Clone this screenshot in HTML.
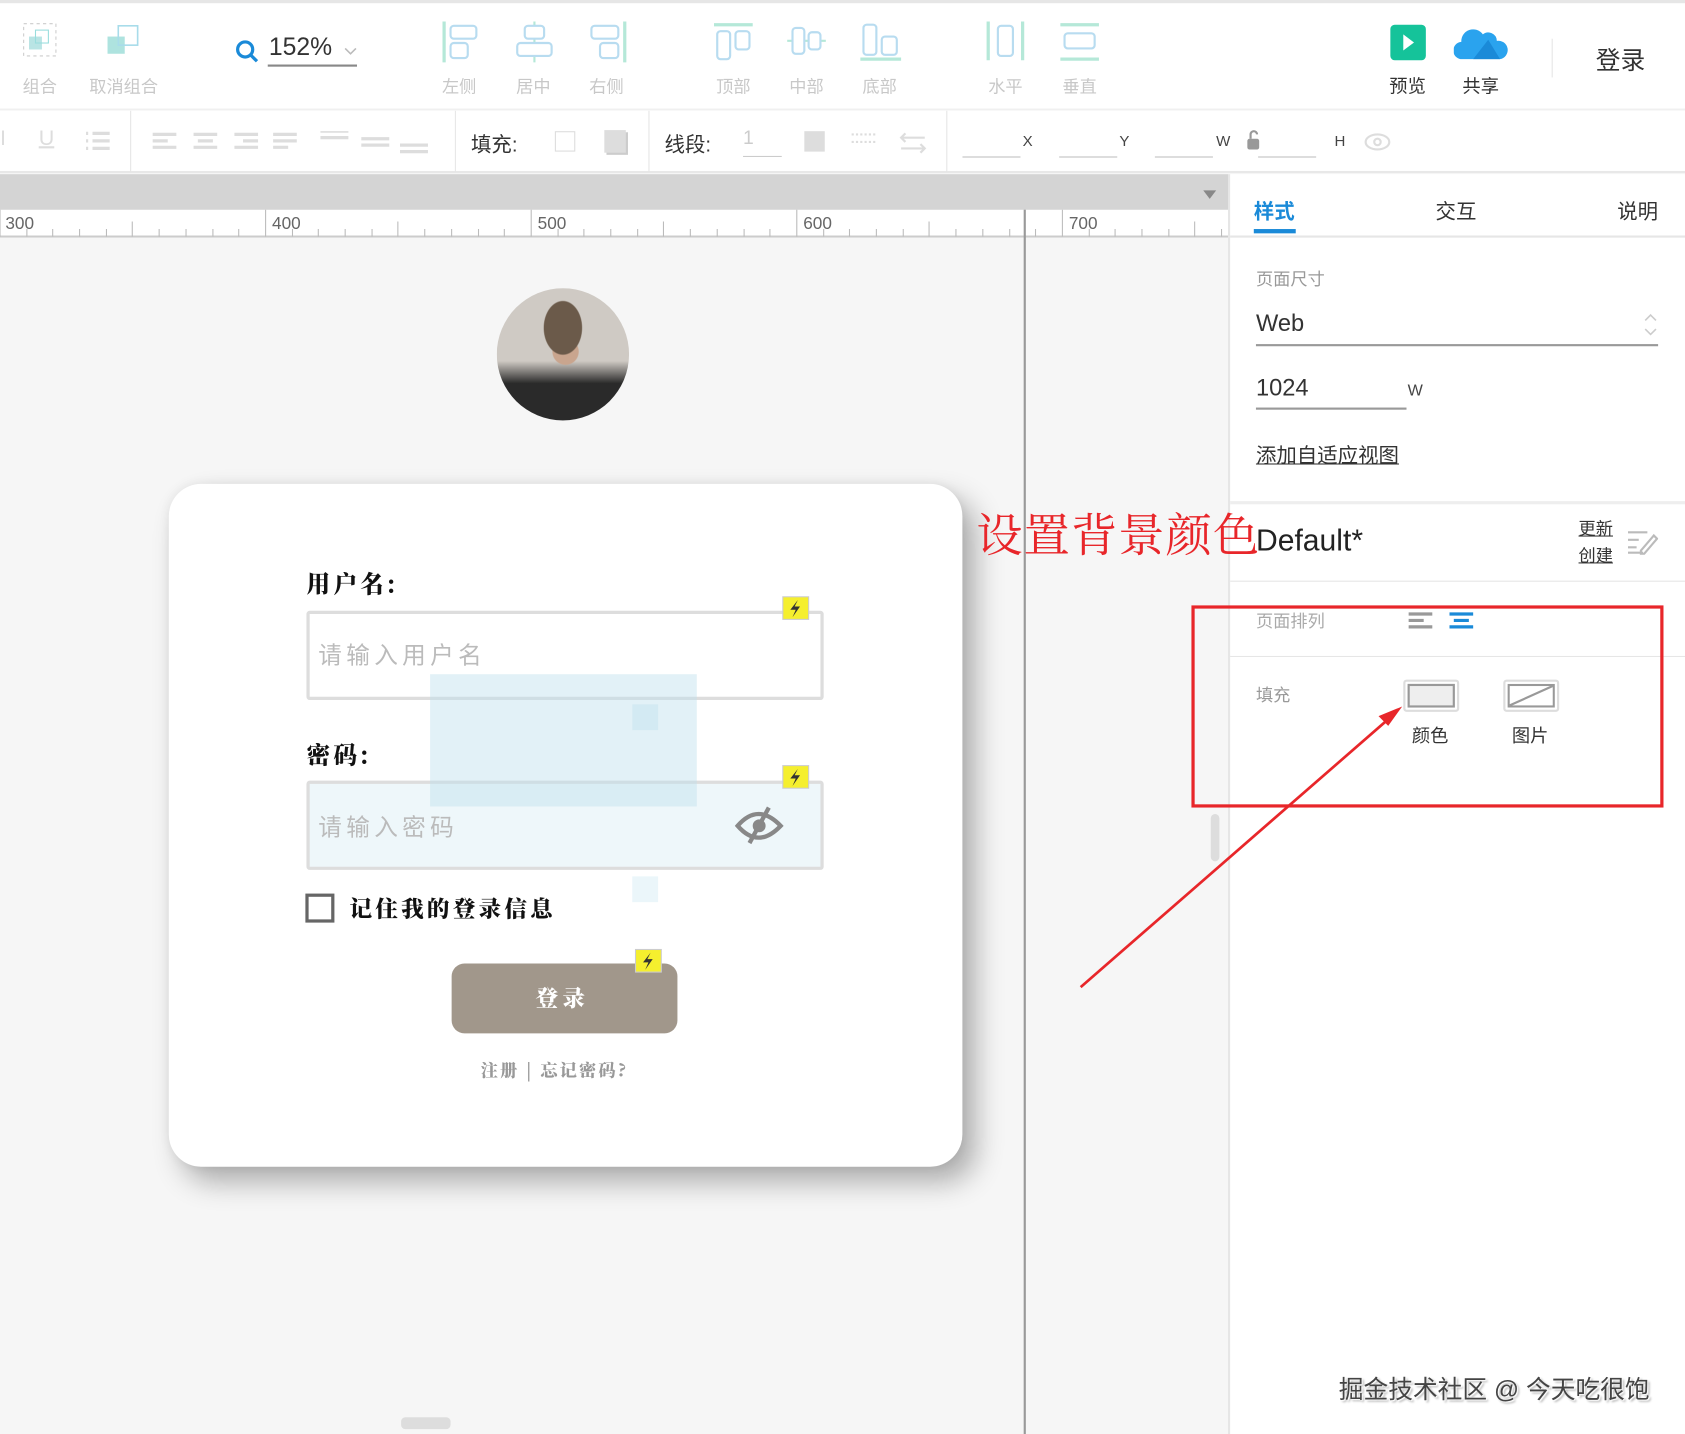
<!DOCTYPE html>
<html><head><meta charset="utf-8"><style>
*{margin:0;padding:0;box-sizing:border-box}
html,body{width:1685px;height:1434px;overflow:hidden;background:#fff}
body{font-family:"Liberation Sans","Noto Sans CJK SC",sans-serif}
#w{position:absolute;left:0;top:0;width:1567px;height:1334px;transform:scale(1.0753);transform-origin:0 0;background:#f6f6f6}
.a{position:absolute}
.lbl{position:absolute;font-size:16px;color:#c8c8c8;top:67px}
.ic{position:absolute;top:20px}
.ser{font-family:"Noto Serif CJK SC","WenQuanYi Zen Hei",serif;font-weight:900}
</style></head><body><div id="w">
<div class="a" style="left:0;top:0;width:1567px;height:102px;background:#fff;border-top:3px solid #e6e6e6;border-bottom:1px solid #ececec"></div>
<svg class="ic" style="left:20px" width="36" height="36"><rect x="2" y="2" width="30" height="30" fill="none" stroke="#ccc" stroke-dasharray="3 3"/><rect x="7" y="14" width="12" height="12" fill="#b9e4e4"/><rect x="13" y="8" width="12" height="12" fill="none" stroke="#9dd"/></svg>
<svg class="ic" style="left:96px" width="40" height="36"><rect x="4" y="14" width="16" height="16" fill="#aee3df"/><rect x="14" y="4" width="18" height="18" fill="none" stroke="#a8dcea" stroke-width="1.5"/></svg>
<div class="lbl" style="left:21px">组合</div><div class="lbl" style="left:83px">取消组合</div>
<svg class="a" style="left:218px;top:36px" width="24" height="24"><circle cx="10" cy="10" r="7" fill="none" stroke="#1a8ad8" stroke-width="3"/><path d="M15 15l6 6" stroke="#1a8ad8" stroke-width="3"/></svg>
<div class="a" style="left:250px;top:30px;font-size:23px;color:#333">152%</div>
<svg class="a" style="left:320px;top:44px" width="12" height="8"><path d="M1 1l5 5 5-5" fill="none" stroke="#bbb" stroke-width="1.5"/></svg>
<div class="a" style="left:249px;top:60px;width:83px;height:2px;background:#888"></div>
<svg class="ic" style="left:410px" width="40" height="40"><path d="M3 0v38" stroke="#b5e8d8" stroke-width="3"/><rect x="9" y="4" width="24" height="12" rx="3" fill="none" stroke="#b8dcf0" stroke-width="2"/><rect x="9" y="20" width="16" height="14" rx="3" fill="none" stroke="#b8dcf0" stroke-width="2"/></svg>
<svg class="ic" style="left:478px" width="40" height="40"><path d="M19 0v38" stroke="#b5e8d8" stroke-width="2"/><rect x="10" y="4" width="18" height="12" rx="3" fill="#fff" stroke="#b8dcf0" stroke-width="2"/><rect x="3" y="20" width="32" height="12" rx="3" fill="#fff" stroke="#b8dcf0" stroke-width="2"/></svg>
<svg class="ic" style="left:546px" width="40" height="40"><path d="M35 0v38" stroke="#b5e8d8" stroke-width="3"/><rect x="4" y="4" width="25" height="12" rx="3" fill="none" stroke="#b8dcf0" stroke-width="2"/><rect x="12" y="20" width="17" height="14" rx="3" fill="none" stroke="#b8dcf0" stroke-width="2"/></svg>
<div class="lbl" style="left:411px">左侧</div><div class="lbl" style="left:480px">居中</div><div class="lbl" style="left:548px">右侧</div>
<svg class="ic" style="left:664px" width="40" height="40"><path d="M0 3h36" stroke="#b5e8d8" stroke-width="3"/><rect x="3" y="9" width="12" height="26" rx="3" fill="none" stroke="#b8dcf0" stroke-width="2"/><rect x="20" y="9" width="13" height="17" rx="3" fill="none" stroke="#b8dcf0" stroke-width="2"/></svg>
<svg class="ic" style="left:732px" width="40" height="40"><path d="M0 18h36" stroke="#b5e8d8" stroke-width="2"/><rect x="5" y="6" width="11" height="24" rx="3" fill="#fff" stroke="#b8dcf0" stroke-width="2"/><rect x="20" y="10" width="11" height="16" rx="3" fill="#fff" stroke="#b8dcf0" stroke-width="2"/></svg>
<svg class="ic" style="left:800px" width="40" height="40"><path d="M0 35h38" stroke="#b5e8d8" stroke-width="3"/><rect x="3" y="3" width="12" height="28" rx="3" fill="none" stroke="#b8dcf0" stroke-width="2"/><rect x="20" y="14" width="14" height="17" rx="3" fill="none" stroke="#b8dcf0" stroke-width="2"/></svg>
<div class="lbl" style="left:666px">顶部</div><div class="lbl" style="left:734px">中部</div><div class="lbl" style="left:802px">底部</div>
<svg class="ic" style="left:916px" width="40" height="40"><path d="M3 0v36M35 0v36" stroke="#b5e8d8" stroke-width="3"/><rect x="12" y="4" width="14" height="28" rx="3" fill="none" stroke="#b8dcf0" stroke-width="2"/></svg>
<svg class="ic" style="left:986px" width="40" height="40"><path d="M0 3h36M0 35h36" stroke="#b5e8d8" stroke-width="3"/><rect x="4" y="11" width="28" height="14" rx="3" fill="none" stroke="#b8dcf0" stroke-width="2"/></svg>
<div class="lbl" style="left:919px">水平</div><div class="lbl" style="left:988px">垂直</div>
<svg class="a" style="left:1292px;top:22px" width="36" height="36"><rect x="1" y="1" width="33" height="33" rx="4" fill="#15c39a"/><path d="M13 10l10 7.5-10 7.5z" fill="#fff"/></svg>
<svg class="a" style="left:1352px;top:22px" width="52" height="36"><path d="M8 33a8 8 0 0 1-1-16 11 11 0 0 1 20-7 8 8 0 0 1 13 6 8 8 0 0 1 3 17z" fill="#2aa3ee"/><path d="M18 33l14-18 11 18z" fill="#1a8ad8"/></svg>
<div class="a" style="left:1292px;top:66px;font-size:17px;color:#333">预览</div>
<div class="a" style="left:1360px;top:66px;font-size:17px;color:#333">共享</div>
<div class="a" style="left:1443px;top:36px;width:1px;height:36px;background:#e6e6e6"></div>
<div class="a" style="left:1484px;top:37px;font-size:23px;color:#333">登录</div>
<div class="a" style="left:0;top:103px;width:1567px;height:58px;background:#fff;border-bottom:2px solid #e8e8e8"></div>
<div class="a" style="left:121px;top:103px;width:1px;height:57px;background:#e6e6e6"></div>
<div class="a" style="left:423px;top:103px;width:1px;height:57px;background:#e6e6e6"></div>
<div class="a" style="left:603px;top:103px;width:1px;height:57px;background:#e6e6e6"></div>
<div class="a" style="left:880px;top:103px;width:1px;height:57px;background:#e6e6e6"></div>
<div class="a" style="left:0;top:118px;font-size:20px;color:#ddd">I</div>
<div class="a" style="left:36px;top:118px;font-size:20px;color:#ddd;text-decoration:underline">U</div>
<svg class="a" style="left:78px;top:122px" width="28" height="20"><g stroke="#ddd" stroke-width="3"><path d="M2 2h2M8 2h16M2 9h2M8 9h16M2 16h2M8 16h16"/></g></svg>
<svg class="a" style="left:140px;top:122px" width="270" height="24" stroke="#ddd" stroke-width="3"><path d="M2 3h22M2 9h14M2 15h22M40 3h22M44 9h14M40 15h22M78 3h22M86 9h14M78 15h22M114 3h22M114 9h22M114 15h14M158 0h26M158 6h26M196 7h26M196 13h26M232 13h26M232 19h26"/></svg>
<div class="a" style="left:438px;top:120px;font-size:19px;color:#333">填充:</div>
<div class="a" style="left:516px;top:122px;width:19px;height:19px;border:1px solid #ddd"></div>
<div class="a" style="left:562px;top:121px;width:20px;height:21px;background:#ddd;box-shadow:2px 2px 0 #ccc"></div>
<div class="a" style="left:618px;top:120px;font-size:19px;color:#333">线段:</div>
<div class="a" style="left:691px;top:118px;font-size:18px;color:#ccc">1</div>
<div class="a" style="left:691px;top:145px;width:36px;height:1px;background:#ccc"></div>
<div class="a" style="left:748px;top:122px;width:19px;height:19px;background:#ddd"></div>
<svg class="a" style="left:790px;top:120px" width="80" height="26" fill="none" stroke="#ddd" stroke-width="2"><path d="M2 5h24M2 12h24" stroke-dasharray="2 2"/><path d="M48 8h22M52 4l-4 4 4 4M48 18h22M66 14l4 4-4 4"/></svg>
<svg class="a" style="left:895px;top:120px" width="410" height="30"><g stroke="#bbb"><path d="M0 26h54M90 26h54M179 26h54M275 26h54"/></g><g font-size="14" fill="#444" font-family="Liberation Sans"><text x="56" y="16">X</text><text x="146" y="16">Y</text><text x="236" y="16">W</text><text x="346" y="16">H</text></g><rect x="265" y="9" width="11" height="10" rx="2" fill="#999"/><path d="M268 9v-4a3 3 0 0 1 6 0" fill="none" stroke="#999" stroke-width="2"/><ellipse cx="386" cy="12" rx="11" ry="7" fill="none" stroke="#ddd" stroke-width="2"/><circle cx="386" cy="12" r="3" fill="none" stroke="#ddd" stroke-width="2"/></svg>
<div class="a" style="left:0;top:162px;width:1143px;height:34px;background:#d4d4d4"></div>
<div class="a" style="left:1119px;top:177px;border:6px solid transparent;border-top:8px solid #888"></div>
<svg class="a" style="left:0;top:195px" width="1143" height="26"><rect width="1143" height="26" fill="#fff"/><path d="M0 25h1143" stroke="#ccc" stroke-width="2"/>
<g stroke="#bbb"><path d="M0 0v25M247 0v25M494 0v25M741 0v25M988 0v25"/>
<path d="M25 18v7M49 18v7M74 18v7M99 18v7M123 11v14M148 18v7M173 18v7M198 18v7M222 18v7M272 18v7M296 18v7M321 18v7M346 18v7M370 11v14M395 18v7M420 18v7M445 18v7M469 18v7M519 18v7M543 18v7M568 18v7M593 18v7M617 11v14M642 18v7M667 18v7M692 18v7M716 18v7M766 18v7M790 18v7M815 18v7M840 18v7M864 11v14M889 18v7M914 18v7M939 18v7M963 18v7M1013 18v7M1037 18v7M1062 18v7M1087 18v7M1111 11v14M1136 18v7"/></g>
<g font-size="16" fill="#666" font-family="Liberation Sans"><text x="5" y="18">300</text><text x="253" y="18">400</text><text x="500" y="18">500</text><text x="747" y="18">600</text><text x="994" y="18">700</text></g></svg>
<div class="a" style="left:952px;top:195px;width:2px;height:1139px;background:#999"></div>
<div class="a" style="left:1126px;top:757px;width:8px;height:44px;border-radius:4px;background:#ddd"></div>
<div class="a" style="left:373px;top:1318px;width:46px;height:11px;border-radius:4px;background:#ddd"></div>
<div class="a" style="left:157px;top:450px;width:738px;height:635px;background:#fff;border-radius:30px;box-shadow:12px 14px 26px rgba(0,0,0,.3),0 0 10px rgba(0,0,0,.06)"></div>
<div class="a" style="left:462px;top:268px;width:123px;height:123px;border-radius:50%;overflow:hidden;background:radial-gradient(ellipse at 50% 30%,#6b5a4a 0 20%,transparent 21%),radial-gradient(circle at 52% 48%,#c9a58e 0 13%,transparent 14%),linear-gradient(180deg,#cfcac4 0 55%,#2a2a2a 72%)"></div>
<div class="a ser" style="left:285px;top:527px;font-size:22px;color:#111;letter-spacing:3px">用户名:</div>
<div class="a" style="left:285px;top:568px;width:481px;height:83px;border:3px solid #ddd;border-radius:3px;background:#fff"></div>
<div class="a" style="left:296px;top:592px;font-size:22px;color:#bbb;letter-spacing:4px">请输入用户名</div>
<div class="a ser" style="left:285px;top:686px;font-size:22px;color:#111;letter-spacing:3px">密码:</div>
<div class="a" style="left:285px;top:726px;width:481px;height:83px;border:3px solid #ddd;border-radius:3px;background:#eef7fa"></div>
<div class="a" style="left:400px;top:627px;width:248px;height:123px;background:rgba(190,225,238,.45)"></div>
<div class="a" style="left:588px;top:655px;width:24px;height:24px;background:rgba(190,225,238,.4)"></div>
<div class="a" style="left:588px;top:815px;width:24px;height:24px;background:rgba(190,225,238,.3)"></div>
<div class="a" style="left:296px;top:752px;font-size:22px;color:#bbb;letter-spacing:4px">请输入密码</div>
<svg class="a" style="left:683px;top:748px" width="46" height="40"><path d="M3 20q19-22 40 0q-21 22-40 0z" fill="none" stroke="#888" stroke-width="4"/><circle cx="23" cy="20" r="6" fill="#888"/><path d="M14 36l18-33" stroke="#888" stroke-width="4"/></svg>
<div class="a" style="left:284px;top:831px;width:27px;height:27px;border:3px solid #666"></div>
<div class="a ser" style="left:325px;top:830px;font-size:21px;color:#111;letter-spacing:3px">记住我的登录信息</div>
<div class="a" style="left:420px;top:896px;width:210px;height:65px;border-radius:12px;background:#a1978b"></div>
<div class="a ser" style="left:498px;top:913px;font-size:21px;color:#fff;letter-spacing:4px">登录</div>
<div class="a ser" style="left:447px;top:983px;font-size:16px;color:#999;letter-spacing:2px">注册 | 忘记密码?</div>
<svg class="a" style="left:727px;top:554px" width="26" height="24"><rect x="1" y="1" width="24" height="21" fill="#f5ef2e" stroke="#ccc"/><path d="M15 4l-7 9h5l-3 7 7-10h-5z" fill="#333"/></svg>
<svg class="a" style="left:727px;top:711px" width="26" height="24"><rect x="1" y="1" width="24" height="21" fill="#f5ef2e" stroke="#ccc"/><path d="M15 4l-7 9h5l-3 7 7-10h-5z" fill="#333"/></svg>
<svg class="a" style="left:590px;top:882px" width="26" height="24"><rect x="1" y="1" width="24" height="21" fill="#f5ef2e" stroke="#ccc"/><path d="M15 4l-7 9h5l-3 7 7-10h-5z" fill="#333"/></svg>
<div class="a" style="left:1142px;top:162px;width:425px;height:1172px;background:#fff;border-left:2px solid #e6e6e6"></div>
<div class="a" style="left:1166px;top:182px;font-size:19px;color:#1a8ad8;font-weight:bold">样式</div>
<div class="a" style="left:1166px;top:213px;width:39px;height:4px;background:#1a8ad8"></div>
<div class="a" style="left:1335px;top:182px;font-size:19px;color:#333">交互</div>
<div class="a" style="left:1504px;top:182px;font-size:19px;color:#333">说明</div>
<div class="a" style="left:1144px;top:219px;width:423px;height:2px;background:#e6e6e6"></div>
<div class="a" style="left:1168px;top:246px;font-size:16px;color:#999">页面尺寸</div>
<div class="a" style="left:1168px;top:288px;font-size:22px;color:#333">Web</div>
<svg class="a" style="left:1528px;top:290px" width="14" height="24" fill="none" stroke="#ccc" stroke-width="1.5"><path d="M2 8l5-5 5 5M2 16l5 5 5-5"/></svg>
<div class="a" style="left:1168px;top:320px;width:374px;height:2px;background:#999"></div>
<div class="a" style="left:1168px;top:348px;font-size:22px;color:#333">1024</div>
<div class="a" style="left:1168px;top:379px;width:140px;height:2px;background:#999"></div>
<div class="a" style="left:1309px;top:355px;font-size:15px;color:#444">W</div>
<div class="a" style="left:1168px;top:409px;font-size:19px;color:#333;text-decoration:underline">添加自适应视图</div>
<div class="a" style="left:1144px;top:466px;width:423px;height:3px;background:#eee"></div>
<div class="a" style="left:1168px;top:487px;font-size:28px;color:#222">Default*</div>
<div class="a" style="left:1468px;top:480px;font-size:16px;color:#333;text-decoration:underline;line-height:25px">更新<br>创建</div>
<svg class="a" style="left:1512px;top:492px" width="30" height="24" stroke="#bbb" stroke-width="2" fill="none"><path d="M2 3h18M2 10h10M2 17h8M2 22h14M14 20l12-14 3 3-12 14h-3z"/></svg>
<div class="a" style="left:1144px;top:540px;width:423px;height:1px;background:#e6e6e6"></div>
<div class="a" style="left:1168px;top:564px;font-size:16px;color:#aaa">页面排列</div>
<svg class="a" style="left:1308px;top:568px" width="66" height="20" stroke-width="3"><path d="M2 3h22M2 9h14M2 15h22" stroke="#999"/><path d="M40 3h22M44 9h14M40 15h22" stroke="#1a8ad8"/></svg>
<div class="a" style="left:1144px;top:610px;width:423px;height:1px;background:#e6e6e6"></div>
<div class="a" style="left:1168px;top:633px;font-size:16px;color:#999">填充</div>
<div class="a" style="left:1305px;top:632px;width:52px;height:30px;border:2px solid #ddd;border-radius:3px;padding:2px"><div style="width:100%;height:100%;border:2px solid #999;background:#eee"></div></div>
<div class="a" style="left:1398px;top:632px;width:52px;height:30px;border:2px solid #ddd;border-radius:3px;padding:2px"><svg width="44" height="22" style="display:block"><rect x="1" y="1" width="42" height="20" fill="#fff" stroke="#999" stroke-width="2"/><path d="M2 20L42 2" stroke="#999" stroke-width="2"/></svg></div>
<div class="a" style="left:1313px;top:670px;font-size:17px;color:#333">颜色</div>
<div class="a" style="left:1406px;top:670px;font-size:17px;color:#333">图片</div>
<div class="a" style="left:908px;top:471px;font-size:43px;line-height:50px;color:#e8262a;font-family:'Noto Serif CJK SC',serif;white-space:nowrap;letter-spacing:1px">设置背景颜色</div>
<div class="a" style="left:1108px;top:563px;width:439px;height:188px;border:3px solid #e8262a"></div>
<svg class="a" style="left:0;top:0" width="1567" height="1334"><path d="M1005 918L1292 668" stroke="#e8262a" stroke-width="2.5"/><path d="M1304 657l-22 9 9 9z" fill="#e8262a"/></svg>
<div class="a" style="left:1245px;top:1273px;font-size:23px;color:#444;text-shadow:1px 1px 1px #fff,2px 2px 2px #aaa">掘金技术社区 @ 今天吃很饱</div>
</div></body></html>
